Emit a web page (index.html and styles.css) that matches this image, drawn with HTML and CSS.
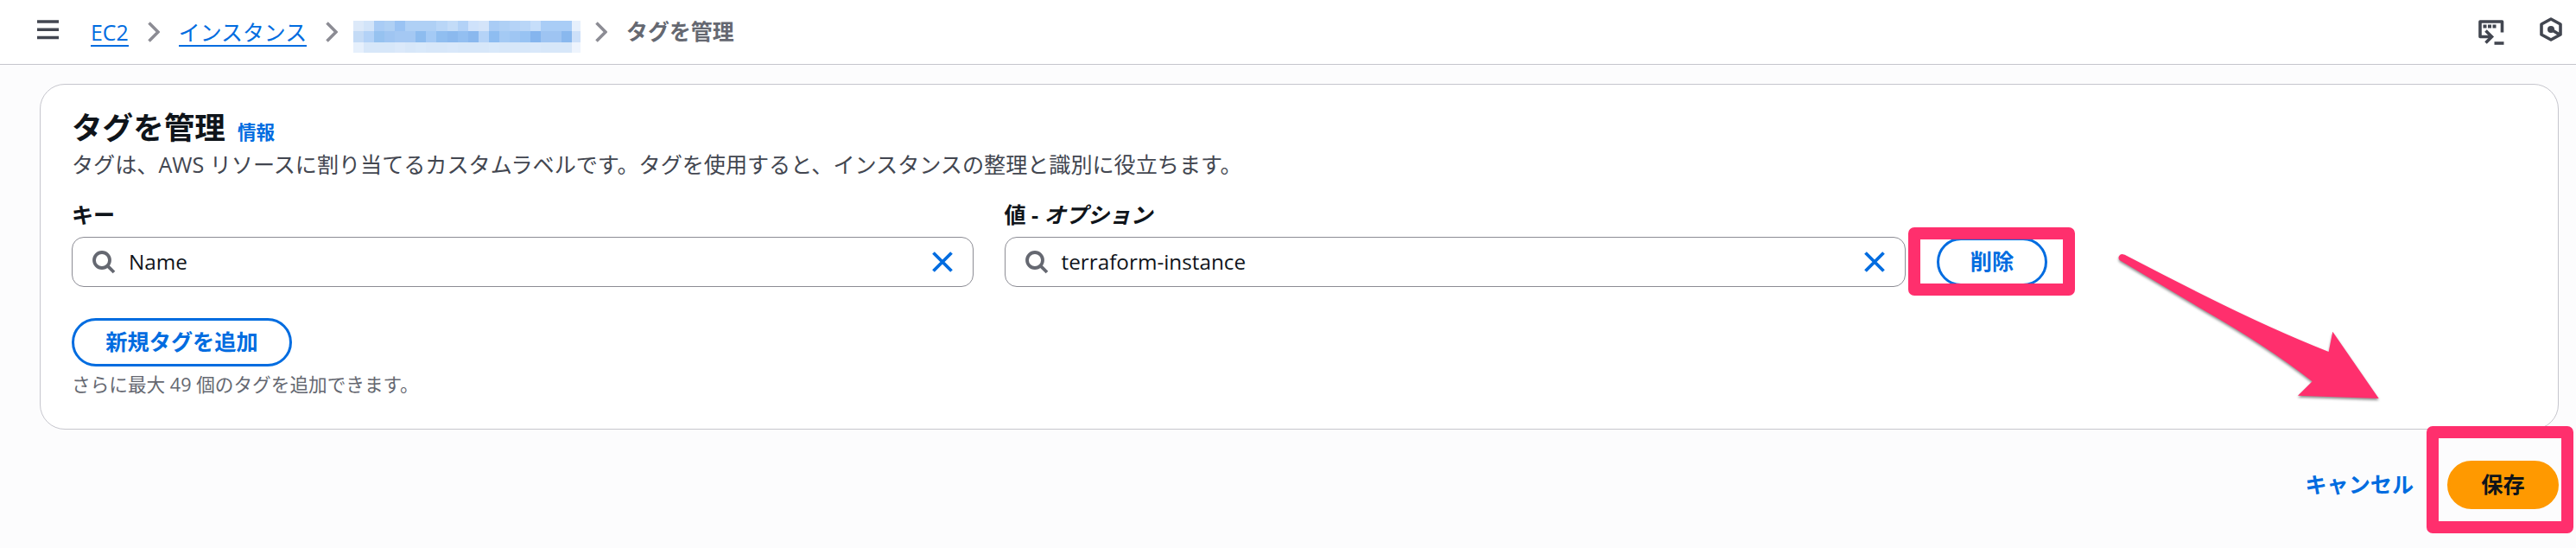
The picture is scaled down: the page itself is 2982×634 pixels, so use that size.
FILE: index.html
```html
<!DOCTYPE html>
<html lang="ja">
<head>
  <meta charset="UTF-8">
  <meta name="viewport" content="width=device-width, initial-scale=1.0">
  <title>タグを管理 | EC2</title>
  <link rel="stylesheet" href="styles.css">
</head>
<body>
  <header class="topbar">
    <svg class="menu-icon" width="25" height="23" viewBox="0 0 25 23">
      <path d="M0 2h25M0 11.25h25M0 20.5h25"/>
    </svg>
    <nav class="breadcrumbs">
      <a class="crumb" href="#">EC2</a>
      <svg class="chevron" width="14" height="24" viewBox="0 0 14 24"><path d="M1.5 1.5L12 12L1.5 22.5"/></svg>
      <a class="crumb" href="#">インスタンス</a>
      <svg class="chevron" width="14" height="24" viewBox="0 0 14 24"><path d="M1.5 1.5L12 12L1.5 22.5"/></svg>
      <div class="masked" id="maskedId"></div>
      <svg class="chevron" width="14" height="24" viewBox="0 0 14 24"><path d="M1.5 1.5L12 12L1.5 22.5"/></svg>
      <span class="current">タグを管理</span>
    </nav>
    <div class="tools">
      <!-- CloudShell -->
      <svg class="shell-icon" width="30" height="30" viewBox="0 0 30 30">
        <path d="M15 19.5H2V2H27.5V14.5" stroke-linejoin="round"/>
        <path d="M8.5 12.5L15.5 19.5L8.5 26.5"/>
        <path d="M18.5 27H29.5"/>
        <path class="dots" d="M5.5 5.5h4v4h-4zM11 5.5h4v4h-4zM16.5 5.5h4v4h-4z"/>
      </svg>
      <svg class="hex-icon" width="26" height="28" viewBox="0 0 26 28">
        <path d="M13 2L24 8V20L13 26L2 20V8Z" stroke-linejoin="round"/>
        <path d="M13 14L23 20"/>
        <circle cx="13" cy="14" r="4"/>
      </svg>
    </div>
  </header>

  <main>
    <!-- Tag editor -->
    <section class="card">
      <div class="card-title">
        <h1>タグを管理</h1>
        <a class="info" href="#">情報</a>
      </div>
      <p class="description">タグは、AWS リソースに割り当てるカスタムラベルです。タグを使用すると、インスタンスの整理と識別に役立ちます。</p>

      <div class="tag-row">
        <div class="field">
          <div class="label">キー</div>
          <div class="input">
            <svg class="search" width="27" height="27" viewBox="0 0 27 27"><circle cx="11" cy="11" r="9"/><path d="M17.3 17.3L25 25"/></svg>
            <span class="value">Name</span>
            <svg class="clear" width="24" height="24" viewBox="0 0 24 24"><path d="M1.5 1.5L22.5 22.5M22.5 1.5L1.5 22.5"/></svg>
          </div>
        </div>
        <div class="field">
          <div class="label">値 - <i>オプション</i></div>
          <div class="input">
            <svg class="search" width="27" height="27" viewBox="0 0 27 27"><circle cx="11" cy="11" r="9"/><path d="M17.3 17.3L25 25"/></svg>
            <span class="value">terraform-instance</span>
            <svg class="clear" width="24" height="24" viewBox="0 0 24 24"><path d="M1.5 1.5L22.5 22.5M22.5 1.5L1.5 22.5"/></svg>
          </div>
        </div>
        <div class="marked">
          <button class="btn btn-remove">削除</button>
          <div class="mark mark-remove"></div>
        </div>
      </div>

      <button class="btn btn-add">新規タグを追加</button>
      <p class="hint">さらに最大 49 個のタグを追加できます。</p>
    </section>

    <div class="actions">
      <a class="cancel" href="#">キャンセル</a>
      <div class="marked">
        <button class="btn btn-save">保存</button>
        <div class="mark mark-save"></div>
      </div>
    </div>
  </main>

  <svg class="arrow" width="340" height="210" viewBox="0 0 340 210">
    <path d="M17.5 14.2Q19.5 14.4 22 16Q68 40 113 62.5Q190 101 255.7 127L260.3 103.7L313.7 181L220 177.7L236.7 161.3Q185 121 113 80L14.5 21.5A4 4 0 0 1 17.5 14.2Z"/>
  </svg>

  <script>
    // Tile colors that hide the instance id, one line per row
    const tiles = [
      'dce9f9 d2e4f9 a9ccf5 afd0f4 9ac3f3 afd0f5 afd0f5 afd0f5 b9d6f7 c3dcf8 b3d2f7 cfe2fb d4e4f9 a9ccf5 afd0f5 b5d3f7 b9d6f7 c6defa a9cdf6 a9cdf6 a9cdf6 e6f0fc',
      'c4dbf6 b3d2f7 96c2f0 9fc5f2 a4c8f3 a4c8f3 8dbcef a4caf5 90bef0 8bb9ee 93bff1 8ab8ee b5d3f7 8ebdf1 a4caf4 9fc6f3 98c3f3 85b5ee 9ec4f2 9ec4f2 89b8ee cde0f9',
      'e6f0fc d7e7f9 d7e7f9 d7e7f9 dbe9fa d7e7f9 d9e9fa d7e7f9 d7e7f9 d9e8fa d7e7f9 d7e7f9 d7e7f9 d9e9fa d7e7f9 d7e7f9 d7e7f9 d9e8fa d7e7f9 d7e7f9 d7e7f9 eef4fd'
    ];
    const masked = document.getElementById('maskedId');
    tiles.forEach((row) => {
      row.split(' ').forEach((color) => {
        const tile = document.createElement('span');
        tile.style.background = '#' + color;
        masked.appendChild(tile);
      });
    });
  </script>
</body>
</html>
```

FILE: styles.css
```css
* {
  box-sizing: border-box;
}

body {
  margin: 0;
  position: relative;
  height: 634px;
  overflow: hidden;
  background: #fcfcfd;
  color: #0f141a;
  font-family: "Open Sans", "Noto Sans CJK JP", sans-serif;
  font-size: 24.9px;
  line-height: 36px;
}

h1, p {
  margin: 0;
}

a {
  color: #006ce0;
  text-decoration: none;
}

svg {
  display: block;
  flex: none;
  fill: none;
}

/* Top bar */
.topbar {
  display: flex;
  align-items: flex-start;
  height: 75px;
  padding: 0 16px 0 43px;
  background: #fff;
  border-bottom: 1px solid #c6c6cd;
}

.menu-icon {
  margin-top: 23px;
  stroke: #424650;
  stroke-width: 3.6;
}

.breadcrumbs {
  display: flex;
  align-items: center;
  gap: 22px;
  height: 74px;
  margin-left: 37px;
}

.crumb {
  height: 34px;
  line-height: 34px;
  border-bottom: 2px solid #006ce0;
}

.chevron {
  stroke: #8c8c94;
  stroke-width: 3.6;
}

.masked {
  display: grid;
  grid-template-columns: repeat(21, 12.05px) 10px;
  grid-template-rows: 12px 13px 12px;
  margin: 11px -5px 0 -4px;
}

.current {
  margin-top: -2px;
  color: #656871;
  font-weight: 700;
}

.tools {
  display: flex;
  gap: 41px;
  margin-left: auto;
  padding-top: 20px;
  stroke: #424650;
  stroke-width: 3.6;
}

.shell-icon {
  margin-top: 3px;
}

.dots {
  fill: #424650;
  stroke: none;
}

.hex-icon circle {
  fill: #424650;
  stroke: none;
}

/* Card */
main {
  padding: 22px 20px 0 46px;
}

.card {
  height: 400px;
  padding: 28px 36px 0;
  background: #fff;
  border: 1px solid #c6c6cd;
  border-radius: 29px;
}

.card-title {
  display: flex;
  align-items: baseline;
  gap: 14px;
  height: 43px;
}

h1 {
  font-size: 35.6px;
  line-height: 43px;
}

.info {
  font-size: 21.6px;
  line-height: 28px;
  font-weight: 700;
}

.description {
  margin-top: 3px;
  color: #424650;
  font-size: 25.1px;
}

.tag-row {
  display: flex;
  align-items: flex-end;
  gap: 36px;
  margin-top: 22px;
}

.field {
  width: 1043.5px;
}

.label {
  font-size: 25.1px;
  font-weight: 700;
}

.input {
  display: flex;
  align-items: center;
  height: 58px;
  margin-top: 8px;
  padding: 0 23px;
  border: 1px solid #8c8c94;
  border-radius: 14px;
}

.search {
  stroke: #656871;
  stroke-width: 3.8;
}

.value {
  flex: 1;
  margin-left: 15px;
  padding-bottom: 1px;
  font-size: 24.3px;
  font-weight: 500;
}

.clear {
  stroke: #006ce0;
  stroke-width: 3.8;
}

/* Buttons */
.btn {
  display: block;
  height: 56px;
  padding: 0 0 2px;
  background: #fff;
  border: 3px solid #006ce0;
  border-radius: 28px;
  color: #006ce0;
  font: inherit;
  font-size: 25.2px;
  font-weight: 700;
}

.btn-remove {
  width: 128px;
}

.btn-add {
  width: 255px;
  margin-top: 36px;
}

.btn-save {
  width: 129px;
  background: #ff9900;
  border-color: #ff9900;
  color: #0f141a;
}

.hint {
  margin-top: 7px;
  color: #656871;
  font-size: 21.65px;
  line-height: 28px;
}

.actions {
  display: flex;
  justify-content: flex-end;
  align-items: center;
  gap: 39px;
  margin-top: 36px;
}

.cancel {
  padding-bottom: 2px;
  font-size: 25.1px;
  font-weight: 700;
}

/* Pink highlights */
.marked {
  position: relative;
}

.tag-row .marked {
  padding-bottom: 1px;
}

.mark {
  position: absolute;
  border: 14px solid #ff2f6d;
  border-radius: 7px;
}

.mark-remove {
  top: -12px;
  left: -33px;
  width: 193px;
  height: 79px;
}

.mark-save {
  top: -40px;
  left: -24px;
  width: 170px;
  height: 124px;
}

.arrow {
  position: absolute;
  top: 280px;
  left: 2440px;
  fill: #ff2f6d;
  filter: drop-shadow(0 2px 1.5px rgba(0, 0, 0, 0.45));
}
```
